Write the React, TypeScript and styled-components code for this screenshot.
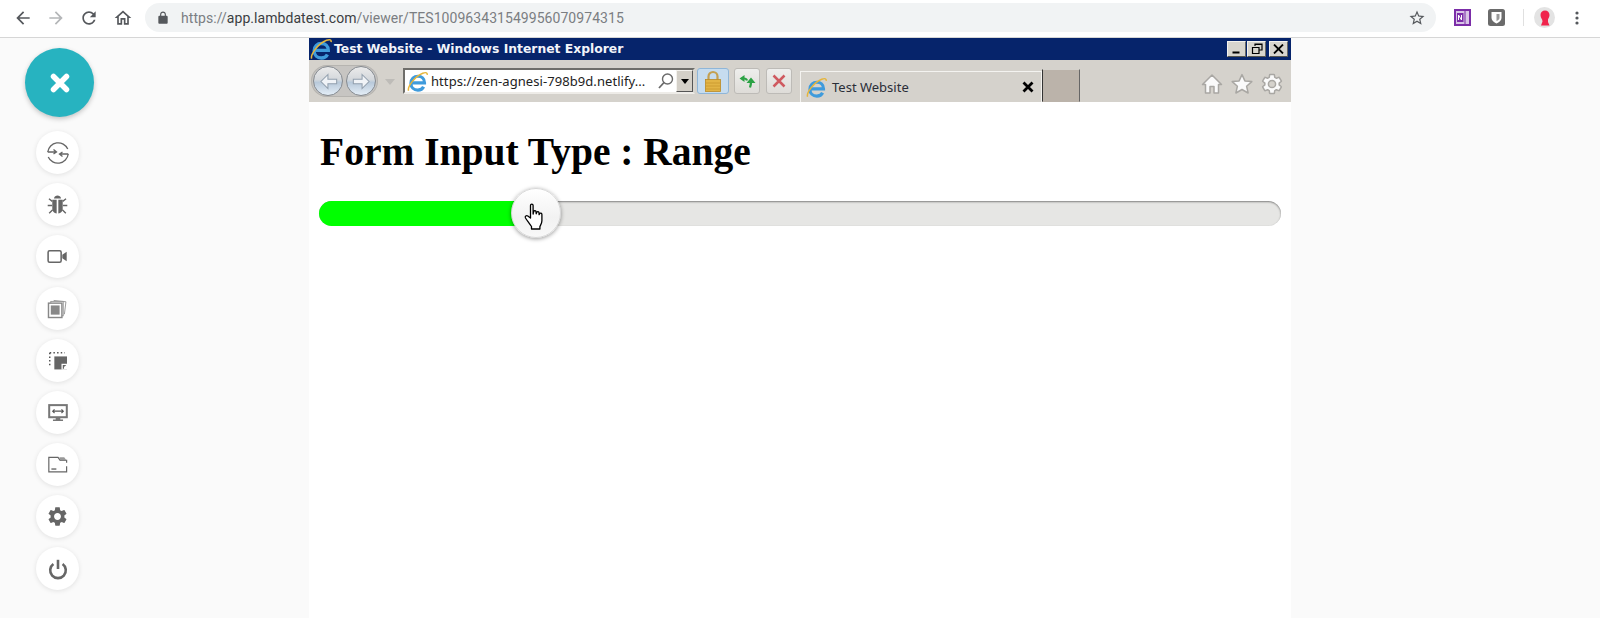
import React from "react";
import styled, { createGlobalStyle } from "styled-components";

const Global = createGlobalStyle`
  html, body { margin: 0; padding: 0; background: #fafafa; overflow: hidden; }
  #root { width: 1600px; height: 618px; }
`;

const GEAR = "M19.14 12.94c.04-.3.06-.61.06-.94 0-.32-.02-.64-.07-.94l2.03-1.58c.18-.14.23-.41.12-.61l-1.92-3.32c-.12-.22-.37-.29-.59-.22l-2.39.96c-.5-.38-1.03-.7-1.62-.94l-.36-2.54c-.04-.24-.24-.41-.48-.41h-3.84c-.24 0-.43.17-.47.41l-.36 2.54c-.59.24-1.13.57-1.62.94l-2.39-.96c-.22-.08-.47 0-.59.22L2.74 8.87c-.12.21-.08.47.12.61l2.03 1.58c-.05.3-.09.63-.09.94s.02.64.07.94l-2.03 1.58c-.18.14-.23.41-.12.61l1.92 3.32c.12.22.37.29.59.22l2.39-.96c.5.38 1.03.7 1.62.94l.36 2.54c.05.24.24.41.48.41h3.84c.24 0 .44-.17.47-.41l.36-2.54c.59-.24 1.13-.56 1.62-.94l2.39.96c.22.08.47 0 .59-.22l1.92-3.32c.12-.22.07-.47-.12-.61l-2.01-1.58zM12 15.6c-1.98 0-3.6-1.62-3.6-3.6s1.62-3.6 3.6-3.6 3.6 1.62 3.6 3.6-1.62 3.6-3.6 3.6z";
const STAR = "M12 2.6l2.9 6.3 6.9.7-5.2 4.6 1.5 6.8-6.1-3.5-6.1 3.5 1.5-6.8-5.2-4.6 6.9-.7z";

const Page = styled.div`
  width: 1600px;
  height: 618px;
  display: flex;
  flex-direction: column;
  background: #fafafa;
`;
const ChromeBar = styled.header`
  height: 38px;
  flex: none;
  box-sizing: border-box;
  background: #fff;
  border-bottom: 1px solid #d6d6d6;
  display: flex;
  align-items: center;
  padding: 0 0 2px 13px;
`;
const NavIcon = styled.svg<{ $mr: number; $faded?: boolean }>`
  width: 20px;
  height: 20px;
  flex: none;
  margin-right: ${(p) => p.$mr}px;
  fill: ${(p) => (p.$faded ? "#b4b6b8" : "#55585c")};
`;
const Omnibox = styled.div`
  width: 1291px;
  height: 29px;
  flex: none;
  margin-left: 3px;
  border-radius: 15px;
  background: #f1f3f4;
  display: flex;
  align-items: center;
  padding: 0 10px 0 11px;
  box-sizing: border-box;
`;
const UrlText = styled.span`
  flex: 1;
  margin-left: 11px;
  font: 14px Roboto, sans-serif;
  letter-spacing: 0.055px;
  color: #7b7e82;
  white-space: nowrap;
`;
const UrlHost = styled.span`
  color: #3b3e42;
`;
const ExtRow = styled.div`
  display: flex;
  align-items: center;
  margin-left: 18px;
`;
const Divider = styled.div`
  width: 1px;
  height: 17px;
  background: #e0e0e0;
  margin: 0 10px 0 18px;
`;
const Body = styled.div`
  flex: 1;
  display: flex;
  min-height: 0;
`;
const Sidebar = styled.nav`
  width: 309px;
  flex: none;
  display: flex;
  flex-direction: column;
  align-items: flex-start;
  padding: 10px 0 0 25px;
  box-sizing: border-box;
`;
const MainFab = styled.div`
  width: 69px;
  height: 69px;
  border-radius: 50%;
  background: #27b3c0;
  box-shadow: 0 2px 5px rgba(0, 0, 0, 0.22);
  display: flex;
  align-items: center;
  justify-content: center;
  margin-bottom: 14px;
`;
const FabItem = styled.div`
  width: 43px;
  height: 43px;
  border-radius: 50%;
  background: #fff;
  box-shadow: 0 1px 5px rgba(0, 0, 0, 0.1);
  display: flex;
  align-items: center;
  justify-content: center;
  margin: 0 0 9px 11px;
`;
const IeWindow = styled.main`
  width: 982px;
  flex: none;
  background: #fff;
  display: flex;
  flex-direction: column;
`;
const TitleBar = styled.div`
  height: 22px;
  flex: none;
  background: #06246b;
  box-sizing: border-box;
  display: flex;
  align-items: center;
  padding: 0 3px 0 1px;
`;
const TitleText = styled.span`
  flex: 1;
  margin-left: 2px;
  font: bold 12.35px "DejaVu Sans", sans-serif;
  color: #f2f4fa;
  white-space: nowrap;
`;
const WinButton = styled.div<{ $ml?: number }>`
  width: 19px;
  height: 16px;
  margin-left: ${(p) => p.$ml ?? 0}px;
  box-sizing: border-box;
  background: #d8d5ce;
  border: 1px solid;
  border-color: #f4f2ee #6a6a66 #55554f #f4f2ee;
  display: flex;
  align-items: center;
  justify-content: center;
`;
const Toolbar = styled.div`
  height: 42px;
  flex: none;
  background: #d5d2cc;
  display: flex;
  align-items: flex-end;
  padding-left: 2px;
`;
const ToolCluster = styled.div`
  display: flex;
  align-items: center;
  align-self: flex-start;
  margin-top: 5px;
`;
const Orbs = styled.div`
  width: 67px;
  height: 32px;
  flex: none;
  border-radius: 16px;
  background: #c7c5c2;
  box-shadow: inset 0 0 0 1px #b6b4b0;
  display: flex;
  align-items: center;
  justify-content: space-between;
  padding: 0 2px;
  box-sizing: border-box;
`;
const Orb = styled.div`
  width: 30px;
  height: 30px;
  border-radius: 50%;
  border: 1px solid #858a90;
  box-sizing: border-box;
  background: linear-gradient(#ebebeb 0%, #d4d8dc 45%, #b8c9da 55%, #e4eef7 100%);
  display: flex;
  align-items: center;
  justify-content: center;
`;
const Caret = styled.div`
  width: 0;
  height: 0;
  margin: 2px 8px 0 7px;
  border-left: 5px solid transparent;
  border-right: 5px solid transparent;
  border-top: 6px solid #bebcb8;
`;
const AddressBox = styled.div`
  width: 292px;
  height: 26px;
  flex: none;
  box-sizing: border-box;
  background: #fff;
  border: 2px solid;
  border-color: #6f6e6a #d8d6d0 #eeece8 #6f6e6a;
  display: flex;
  align-items: center;
  padding-left: 2px;
`;
const AddressText = styled.span`
  flex: 1;
  margin-left: 3px;
  font: 13px "Noto Sans", sans-serif;
  letter-spacing: 0.07px;
  color: #222;
  white-space: nowrap;
`;
const Dropdown = styled.div`
  width: 17px;
  height: 22px;
  flex: none;
  box-sizing: border-box;
  background: #d4d0c8;
  border: 1px solid;
  border-color: #f4f2ee #555 #555 #f4f2ee;
  display: flex;
  align-items: center;
  justify-content: center;
`;
const DropTriangle = styled.div`
  width: 0;
  height: 0;
  border-left: 4px solid transparent;
  border-right: 4px solid transparent;
  border-top: 5px solid #000;
`;
const ToolButton = styled.div<{ $active?: boolean; $w: number; $ml: number }>`
  width: ${(p) => p.$w}px;
  height: 26px;
  flex: none;
  margin-left: ${(p) => p.$ml}px;
  box-sizing: border-box;
  border-radius: 3px;
  border: 1px solid ${(p) => (p.$active ? "#8fb6d8" : "#bdbbb7")};
  background: ${(p) => (p.$active ? "#c6dcef" : "linear-gradient(#eeeeec, #dedcd8)")};
  display: flex;
  align-items: center;
  justify-content: center;
`;
const Tab = styled.div`
  width: 242px;
  height: 31px;
  flex: none;
  margin-left: 8px;
  box-sizing: border-box;
  background: #d5d2cc;
  border: 1px solid #f4f3f0;
  border-bottom: none;
  display: flex;
  align-items: center;
  padding: 0 7px 0 5px;
`;
const TabLabel = styled.span`
  flex: 1;
  margin-left: 5px;
  font: 13px "Noto Sans", sans-serif;
  color: #2a2e38;
  white-space: nowrap;
`;
const NewTab = styled.div`
  width: 38px;
  height: 33px;
  flex: none;
  box-sizing: border-box;
  background: #bbb3aa;
  border: 1px solid;
  border-color: #d5d2cc #666 transparent #333;
`;
const RightTools = styled.div`
  display: flex;
  align-items: center;
  gap: 6px;
  align-self: center;
  margin: 6px 0 0 auto;
  padding-right: 7px;
`;
const Content = styled.section`
  flex: 1;
  padding: 27px 10px 0;
`;
const Heading = styled.h1`
  margin: 0 0 0 1px;
  font: bold 39.5px/46px "Liberation Serif", serif;
  color: #000;
`;
const Track = styled.div`
  position: relative;
  height: 25px;
  width: 962px;
  margin-top: 26px;
  box-sizing: border-box;
  border-radius: 13px;
  background: #e6e6e4;
  box-shadow: inset 0 1px 2px rgba(0, 0, 0, 0.45);
`;
const Fill = styled.div`
  width: 200px;
  height: 25px;
  border-radius: 13px 0 0 13px;
  background: #00ff00;
`;
const Thumb = styled.div`
  position: absolute;
  left: 192px;
  top: -13px;
  width: 50px;
  height: 50px;
  padding: 8px 5px 0 0;
  border-radius: 50%;
  background: linear-gradient(#ffffff 0%, #f2f2f2 60%, #f8f8f8 100%);
  border: 1px solid #d8d8d8;
  box-sizing: border-box;
  box-shadow: 0 1px 4px rgba(0, 0, 0, 0.4);
  display: flex;
  align-items: center;
  justify-content: center;
`;
const Spacer = styled.div`
  flex: 1;
`;

const Ie = ({ size = 22 }: { size?: number }) => (
  <svg width={size} height={size} viewBox="0 0 24 24" style={{ flex: "none" }}>
    <path d="M4.500 13.500H20C20 8.500 16.500 6 12.500 6 8 6 4.500 9 4.500 14c0 4.600 3.400 7.800 7.900 7.800 3.200 0 5.500-1.500 6.600-3.800" fill="none" stroke="#3f9bdc" strokeWidth="3.600" />
    <path d="M1.800 22.500C.2 18 9 6 18 2.500c3.800-1.400 5.500-.4 5 2" fill="none" stroke="#e6b53a" strokeWidth="1.700" />
  </svg>
);

const SideSvg = ({ children, size = 22 }: { children: React.ReactNode; size?: number }) => (
  <svg width={size} height={size} viewBox="0 0 24 24" fill="#666">{children}</svg>
);

const items = [
  <SideSvg size={30} key="a">
    <path d="M3.800 11.200A8.400 8.400 0 0 1 19.800 8.800M20.200 12.800A8.400 8.400 0 0 1 4.200 15.200" fill="none" stroke="#666" strokeWidth="1.050" />
    <path d="M3.800 11.200h6.800M20.200 12.800h-6.800M8.400 9.200l2.400 2-2.400 1.600M15.600 14.800l-2.400-2 2.400-1.600" fill="none" stroke="#666" strokeWidth="1.050" />
  </SideSvg>,
  <SideSvg size={25} key="b">
    <path d="M8.600 6.200C9 4.200 10.400 3.400 12 3.400s3 .8 3.400 2.800z" />
    <path d="M7 7.400h4.200v13.200C8.800 20.300 7 18.500 7 16zM12.800 7.400H17V16c0 2.500-1.800 4.300-4.200 4.600z" />
    <path d="M7 9 3.800 6.400M17 9l3.200-2.600M6.800 13H2.600M17.200 13h4.200M7.400 17l-3.400 3.400M16.600 17l3.400 3.400" stroke="#666" strokeWidth="1.300" fill="none" />
  </SideSvg>,
  <SideSvg size={23} key="c">
    <rect x="2.200" y="6" width="13.600" height="12" rx="1.600" fill="none" stroke="#666" strokeWidth="1.600" />
    <path d="M17 10.200 21.600 7v10L17 13.800z" />
  </SideSvg>,
  <SideSvg size={23} key="d">
    <path d="M8 3.600 20.800 5l-1.600 13" fill="none" stroke="#999" strokeWidth="1" />
    <rect x="5" y="4.600" width="13" height="15" fill="none" stroke="#999" strokeWidth="1" />
    <rect x="2.600" y="6.400" width="14" height="15" fill="#fff" stroke="#888" strokeWidth="1.500" />
    <rect x="5" y="8.800" width="9.200" height="9.600" fill="#888" />
  </SideSvg>,
  <SideSvg key="e">
    <path d="M8 7h13.800v14.200H8z" fill="#666" />
    <path d="M15.800 21.400V15h6v6.400z" fill="#fff" />
    <path d="M17.200 20.400v-4h3.800l-1.600 1.600h-.8v2.400z" fill="#666" />
    <path d="M3 3h16.500M3 3v14" fill="none" stroke="#555" strokeWidth="1.600" strokeDasharray="1.600 2.400" />
  </SideSvg>,
  <SideSvg size={22} key="f">
    <rect x="2.400" y="3.400" width="19.200" height="13.200" fill="#fff" stroke="#777" strokeWidth="2.200" />
    <path d="M6.200 10h11.600M8.200 8l-2 2 2 2M15.800 8l2 2-2 2" fill="none" stroke="#555" strokeWidth="1.200" />
    <path d="M9.500 16.600h5v2.600h3v1.600h-11v-1.600h3z" fill="#777" />
  </SideSvg>,
  <SideSvg size={22} key="g">
    <path d="M21.400 9.500V7h-7L12 3.600H2v15.800h19.400v-6" fill="none" stroke="#666" strokeWidth="1.300" />
    <path d="M13.400 3.600h5.400L21.400 7h-7z" fill="#999" />
    <path d="M4.800 16.400h5.400" stroke="#666" strokeWidth="1.500" />
  </SideSvg>,
  <SideSvg size={23} key="h"><path d={GEAR} /></SideSvg>,
  <SideSvg size={24} key="i">
    <path d="M7.400 7a7.800 7.800 0 1 0 9.200 0" fill="none" stroke="#666" strokeWidth="2.600" />
    <path d="M12 2.800v9.200" stroke="#666" strokeWidth="2.600" />
  </SideSvg>,
];

const OutlineIcon = ({ d }: { d: string }) => (
  <svg width="24" height="24" viewBox="0 0 24 24">
    <path d={d} fill="#fafafa" stroke="#a9a7a3" strokeWidth="1.500" strokeLinejoin="round" />
  </svg>
);

const OrbArrow = ({ flip }: { flip?: boolean }) => (
  <svg width="21" height="21" viewBox="0 0 18 18" style={{ transform: flip ? "scaleX(-1)" : undefined }}>
    <path d="M8.500 3 2.500 9l6 6v-4H16V7H8.500z" fill="#f0f3f7" stroke="#93a0ae" strokeWidth="0.900" />
  </svg>
);

export default function App() {
  return (
    <Page>
      <Global />
      <ChromeBar>
        <NavIcon $mr={13} viewBox="0 0 24 24"><path d="M20 11H7.830l5.590-5.590L12 4l-8 8 8 8 1.410-1.410L7.830 13H20v-2z" /></NavIcon>
        <NavIcon $mr={13} $faded viewBox="0 0 24 24"><path d="M4 11h12.170l-5.590-5.590L12 4l8 8-8 8-1.410-1.410L16.170 13H4v-2z" /></NavIcon>
        <NavIcon $mr={14} viewBox="0 0 24 24"><path d="M17.650 6.350C16.200 4.900 14.210 4 12 4c-4.420 0-7.990 3.580-7.990 8s3.570 8 7.990 8c3.730 0 6.840-2.550 7.730-6h-2.080c-.82 2.330-3.040 4-5.650 4-3.310 0-6-2.690-6-6s2.690-6 6-6c1.660 0 3.140.69 4.220 1.780L13 11h7V4l-2.350 2.350z" /></NavIcon>
        <NavIcon $mr={9} viewBox="0 0 24 24"><path d="M12 5.690l5 4.500V18h-2v-6H9v6H7v-7.810l5-4.500M12 3L2 12h3v8h6v-6h2v6h6v-8h3L12 3z" /></NavIcon>
        <Omnibox>
          <svg width="14" height="14" viewBox="0 0 24 24" fill="#55585c"><path d="M18 8h-1V6c0-2.760-2.240-5-5-5S7 3.240 7 6v2H6c-1.100 0-2 .9-2 2v10c0 1.100.9 2 2 2h12c1.100 0 2-.9 2-2V10c0-1.100-.9-2-2-2zM9 6c0-1.660 1.340-3 3-3s3 1.340 3 3v2H9V6z" /></svg>
          <UrlText>https://<UrlHost>app.lambdatest.com</UrlHost>/viewer/TES100963431549956070974315</UrlText>
          <svg width="18" height="18" viewBox="0 0 24 24" fill="#55585c"><path d="M22 9.240l-7.190-.62L12 2 9.190 8.630 2 9.240l5.460 4.730L5.820 21 12 17.270 18.180 21l-1.630-7.030L22 9.240zM12 15.400l-3.760 2.270 1-4.280-3.320-2.880 4.380-.38L12 6.100l1.710 4.040 4.380.38-3.320 2.880 1 4.280L12 15.400z" /></svg>
        </Omnibox>
        <ExtRow>
          <svg width="17" height="17" viewBox="0 0 17 17">
            <rect width="17" height="17" fill="#7b2da8" />
            <rect x="2" y="2" width="13" height="13" fill="#d8c4e6" />
            <rect x="10.500" y="2" width="1" height="13" fill="#7b2da8" />
            <rect x="3" y="4" width="6.500" height="9" fill="#7b2da8" />
            <path d="M4.500 11V6l3 5V6" fill="none" stroke="#fff" strokeWidth="1" />
          </svg>
          <svg width="17" height="17" viewBox="0 0 17 17" style={{ marginLeft: 17 }}>
            <rect width="17" height="17" rx="2.500" fill="#6b6b6b" />
            <path d="M3.500 3h10v6c0 2.600-2.400 4.100-5 5.500C6 13.100 3.500 11.600 3.500 9z" fill="#fff" />
            <path d="M8.500 5h3v4c0 1.300-1.400 2.300-3 3.100z" fill="#9a9a9a" />
          </svg>
          <Divider />
          <svg width="21" height="21" viewBox="0 0 21 21">
            <circle cx="10.500" cy="10.500" r="10.500" fill="#e3e3e3" />
            <path d="M6.500 8c0-3 2-4.500 4.500-4.500 2.700 0 4.500 2 4.500 4.500 0 2-1 3-1.500 4.500v2.500l1.500 3.500H7l1.500-4C8.500 12 6.500 11 6.500 8z" fill="#f0244c" />
          </svg>
          <svg width="4" height="14" viewBox="0 0 4 14" style={{ marginLeft: 20 }} fill="#55585c">
            <circle cx="2" cy="2" r="1.600" /><circle cx="2" cy="7" r="1.600" /><circle cx="2" cy="12" r="1.600" />
          </svg>
        </ExtRow>
      </ChromeBar>
      <Body>
        <Sidebar>
          <MainFab>
            <svg width="20" height="20" viewBox="0 0 20 20">
              <path d="M3.500 3.500 16.500 16.500M16.500 3.500 3.500 16.500" stroke="#fff" strokeWidth="5.500" strokeLinecap="round" />
            </svg>
          </MainFab>
          {items.map((icon, i) => <FabItem key={i}>{icon}</FabItem>)}
        </Sidebar>
        <IeWindow>
          <TitleBar>
            <Ie size={22} />
            <TitleText>Test Website - Windows Internet Explorer</TitleText>
            <WinButton>
              <svg width="11" height="9" viewBox="0 0 11 9"><rect x="1.500" y="6.500" width="7" height="2" /></svg>
            </WinButton>
            <WinButton $ml={1}>
              <svg width="12" height="12" viewBox="0 0 12 12"><path d="M4 3V1h7v6H8.500M1.500 4.500h6.500v6H1.500zM1.500 4.500V4M4 1.500h7" fill="none" stroke="#000" strokeWidth="1.200" /></svg>
            </WinButton>
            <WinButton $ml={3}>
              <svg width="11" height="10" viewBox="0 0 11 10"><path d="M1 .5 10 9.500M10 .5 1 9.500" stroke="#000" strokeWidth="1.800" /></svg>
            </WinButton>
          </TitleBar>
          <Toolbar>
            <ToolCluster>
              <Orbs>
                <Orb><OrbArrow /></Orb>
                <Orb><OrbArrow flip /></Orb>
              </Orbs>
              <Caret />
              <AddressBox>
                <Ie size={21} />
                <AddressText>https://zen-agnesi-798b9d.netlify...</AddressText>
                <svg width="18" height="18" viewBox="0 0 18 18" style={{ marginRight: 1 }}>
                  <circle cx="10.500" cy="7" r="5" fill="none" stroke="#6a6a6a" strokeWidth="1.400" />
                  <path d="M7 10.500 2 16" stroke="#6a6a6a" strokeWidth="1.800" />
                </svg>
                <Dropdown><DropTriangle /></Dropdown>
              </AddressBox>
              <ToolButton $active $w={32} $ml={2}>
                <svg width="22" height="24" viewBox="0 0 22 24">
                  <path d="M6.500 11V7.500a4.500 4.500 0 0 1 9 0V11" fill="none" stroke="#c4a050" strokeWidth="2.200" />
                  <rect x="3.500" y="10.500" width="15" height="12" fill="#e2b445" stroke="#b88a28" strokeWidth="0.800" />
                  <path d="M3.500 14h15M3.500 17h15M3.500 20h15" stroke="#c9972e" strokeWidth="0.800" />
                </svg>
              </ToolButton>
              <ToolButton $w={26} $ml={5}>
                <svg width="20" height="20" viewBox="0 0 20 20">
                  <path d="M2.500 7.500 7.500 4v7zM14 6.500l4.500 5.500h-9z" fill="#2ba244" />
                  <path d="M7 7.500c1.500 0 2.500.5 3 2M14 11c0 2-.5 4-1 5.500" fill="none" stroke="#2ba244" strokeWidth="2.200" />
                </svg>
              </ToolButton>
              <ToolButton $w={26} $ml={6}>
                <svg width="16" height="16" viewBox="0 0 16 16"><path d="M2.500 2.500 13.500 13.500M13.500 2.500 2.500 13.500" stroke="#cf5a60" strokeWidth="2.500" /></svg>
              </ToolButton>
            </ToolCluster>
            <Tab>
              <Ie size={21} />
              <TabLabel>Test Website</TabLabel>
              <svg width="12" height="12" viewBox="0 0 12 12"><path d="M1.500 1.500 10.500 10.500M10.500 1.500 1.500 10.500" stroke="#000" strokeWidth="2.800" /></svg>
            </Tab>
            <NewTab />
            <RightTools>
              <OutlineIcon d="M12 3 2.500 12.500H5.500V21h4.500v-6.500h4V21h4.500v-8.500H21.500z" />
              <OutlineIcon d={STAR} />
              <OutlineIcon d={GEAR} />
            </RightTools>
          </Toolbar>
          <Content>
            <Heading>Form Input Type : Range</Heading>
            <Track>
              <Fill />
              <Thumb>
                <svg width="22" height="30" viewBox="0 0 22 30">
                  <path d="M7.500 3.500c0-1.800 2.600-1.800 2.600 0V12l.6-2.500c.4-1.400 2.300-1.200 2.300.3l.2 2 .6-1.600c.6-1.100 2.200-.7 2.200.6l.1 1.800.6-1c.7-.9 2.200-.4 2.200.8v6.400c0 2.500-1.200 4-2 5.700v2.500H8.500v-2.500c-2-3-3.900-5.500-6-8.500-1-1.700 1-3 2.300-2L7.500 16z" fill="#fff" stroke="#000" strokeWidth="1.300" strokeLinejoin="round" />
                </svg>
              </Thumb>
            </Track>
          </Content>
        </IeWindow>
        <Spacer />
      </Body>
    </Page>
  );
}
